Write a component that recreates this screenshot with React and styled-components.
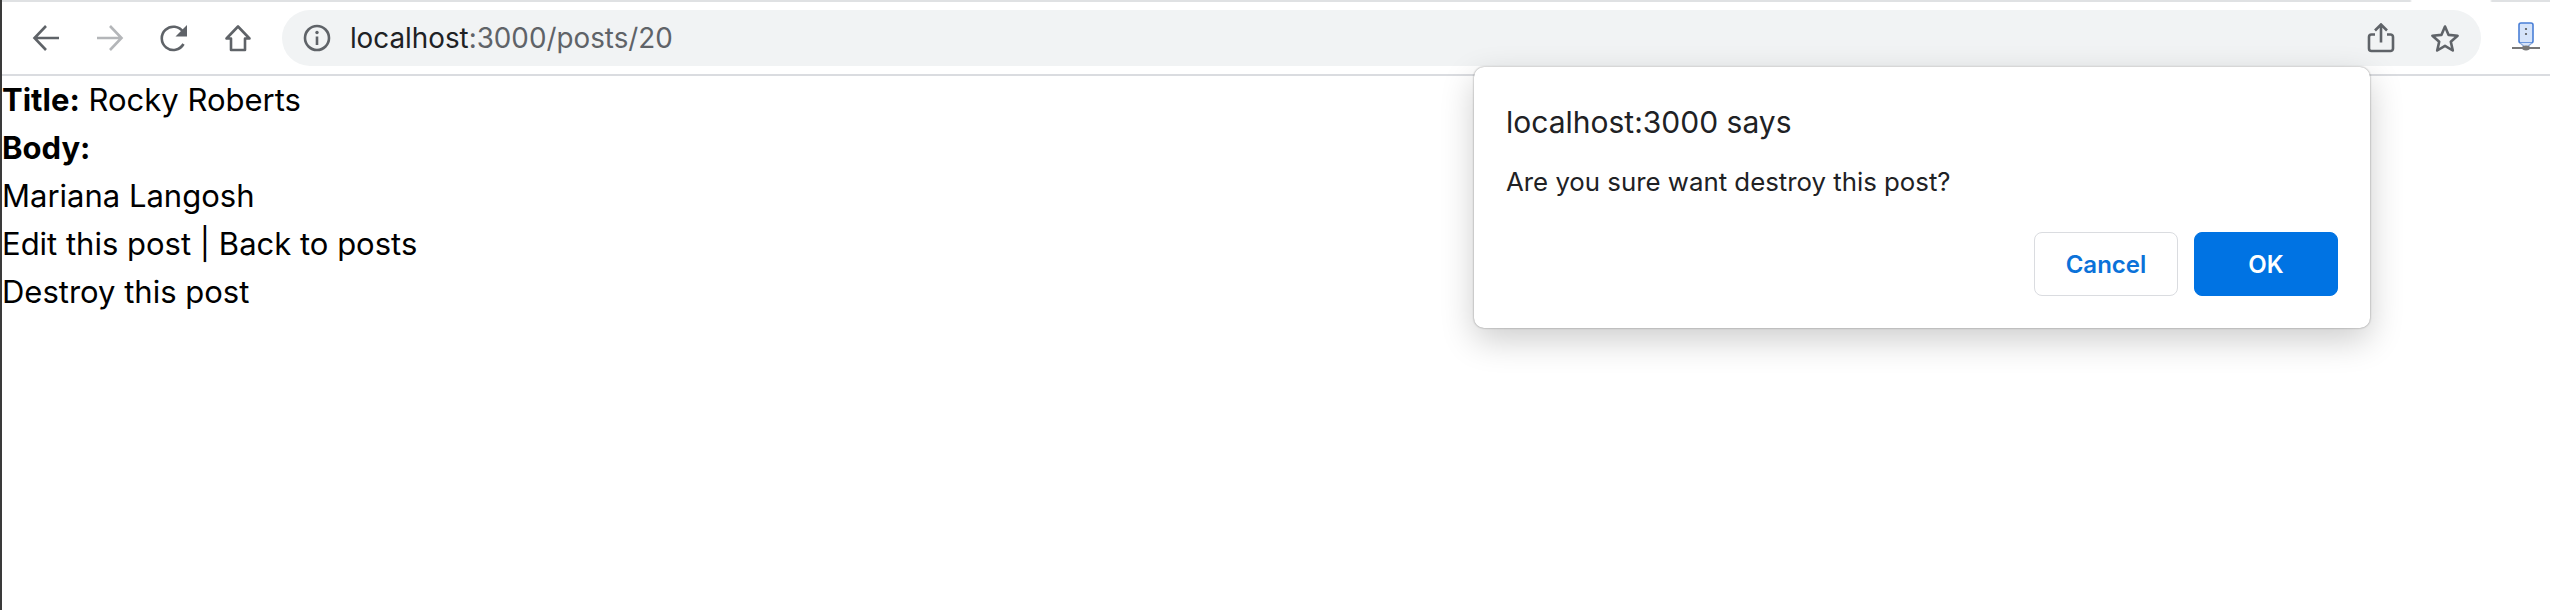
import React from "react";
import styled, { createGlobalStyle } from "styled-components";

const Global = createGlobalStyle`
  html, body { margin: 0; padding: 0; background: #fff; }
  body { font-family: Inter, "Liberation Sans", sans-serif; color: #000; }
`;

const Page = styled.div`
  position: relative;
  width: 2550px;
  height: 610px;
  overflow: hidden;
  background: #fff;
  border-left: 2px solid #3a3a3a;
  box-sizing: border-box;
`;

const TopStripe = styled.div`
  height: 2px;
  background: linear-gradient(to right, #dfe1e3 0, #dfe1e3 2408px, #fff 2410px, #fff 2488px, #dfe1e3 2490px);
`;

const Toolbar = styled.header`
  height: 74px;
  box-sizing: border-box;
  display: flex;
  align-items: center;
  border-bottom: 2px solid #dadce0;
  padding: 8px 9px 8px 30px;
`;

const NavGroup = styled.nav`
  display: flex;
  align-items: center;
  gap: 36px;
  width: 250px;
`;

const NavIcon = styled.svg`
  width: 28px;
  height: 28px;
  flex: none;
  fill: none;
  stroke: ${(p) => p.$color || "#5f6368"};
  stroke-width: 2.6;
`;

const Omnibox = styled.div`
  width: 2200px;
  height: 56px;
  box-sizing: border-box;
  display: flex;
  align-items: center;
  border-radius: 28px;
  background: #f1f3f4;
  padding: 0 21px;
`;

const Url = styled.div`
  flex: 1;
  margin-left: 19px;
  font-size: 27.8px;
  color: #5f6368;
`;

const Host = styled.span`
  color: #202124;
`;

const OmniActions = styled.div`
  display: flex;
  align-items: center;
  gap: 35px;
`;

const ExtensionSlot = styled.div`
  margin-left: 30px;
  width: 30px;
  height: 32px;
  flex: none;
`;

const Content = styled.main`
  font-size: 31px;
  line-height: 48px;
`;

const Line = styled.div`
  height: 48px;
`;

const Dialog = styled.div`
  position: absolute;
  left: 1472px;
  top: 67px;
  width: 896px;
  height: 261px;
  box-sizing: border-box;
  background: #fff;
  border-radius: 10px;
  box-shadow: 0 0 2px rgba(0,0,0,.45), 0 12px 34px rgba(0,0,0,.2);
  padding: 37px 32px 32px;
  display: flex;
  flex-direction: column;
`;

const DialogTitle = styled.div`
  font-size: 30px;
  line-height: 36px;
  color: #202124;
`;

const DialogMessage = styled.div`
  margin-top: 24px;
  font-size: 25.8px;
  line-height: 36px;
  color: #202124;
`;

const DialogActions = styled.div`
  margin-top: auto;
  display: flex;
  justify-content: flex-end;
  gap: 16px;
`;

const DialogButton = styled.div`
  width: 144px;
  height: 64px;
  box-sizing: border-box;
  display: flex;
  align-items: center;
  justify-content: center;
  border-radius: 8px;
  font-size: 24px;
  font-weight: 600;
  border: 1px solid ${(p) => (p.$primary ? "#0073e3" : "#dadce0")};
  background: ${(p) => (p.$primary ? "#0073e3" : "#fff")};
  color: ${(p) => (p.$primary ? "#fff" : "#0b72d9")};
`;

const Arrow = ({ dir, color }) => (
  <NavIcon viewBox="0 0 28 28" $color={color}>
    {dir === "left" ? (
      <path d="M27 14H3M14 2L2.5 14L14 26" />
    ) : (
      <path d="M1 14H25M14 2L25.5 14L14 26" />
    )}
  </NavIcon>
);

const Reload = () => (
  <NavIcon viewBox="0 0 28 28">
    <path d="M23.5 20a11.6 11.6 0 1 1-.4-12" />
    <path d="M27 1v11.5H15.5z" fill="#5f6368" stroke="none" />
  </NavIcon>
);

const Home = () => (
  <NavIcon viewBox="0 0 28 28">
    <path d="M14 2.5L2.5 14.5H7V26H21V14.5H25.5z" strokeLinejoin="round" />
  </NavIcon>
);

const Info = () => (
  <NavIcon viewBox="0 0 28 28">
    <circle cx="14" cy="14" r="12" />
    <path d="M14 12.5V21" />
    <circle cx="14" cy="8.5" r="1.7" fill="#5f6368" stroke="none" />
  </NavIcon>
);

const Share = () => (
  <NavIcon viewBox="0 0 28 30" style={{ height: 30 }}>
    <path d="M8 11.5H4.5a2.5 2.5 0 0 0-2.5 2.5V25.5A2.5 2.5 0 0 0 4.5 28H23.5A2.5 2.5 0 0 0 26 25.5V14A2.5 2.5 0 0 0 23.5 11.5H20" />
    <path d="M14 19.5V2M8 7.5L14 1.5L20 7.5" />
  </NavIcon>
);

const Star = () => (
  <NavIcon viewBox="0 0 30 30" style={{ width: 30, height: 30 }}>
    <path d="M15 3.5L18.6 11.9L27.6 12.7L20.8 18.7L22.8 27.5L15 22.9L7.2 27.5L9.2 18.7L2.4 12.7L11.4 11.9z" strokeLinejoin="round" />
  </NavIcon>
);

const Extension = () => (
  <svg width="30" height="32" viewBox="0 0 30 32">
    <rect x="8" y="1" width="14" height="20" rx="2" fill="#d6e4fa" stroke="#4a7fd6" strokeWidth="1.6" />
    <circle cx="15" cy="7" r="1.1" fill="#555" />
    <circle cx="15" cy="12" r="1.1" fill="#555" />
    <path d="M9 21L15 26L21 21" fill="#d6e4fa" stroke="#8aa8d8" strokeWidth="1.2" />
    <path d="M1 26H29" stroke="#555" strokeWidth="1.6" />
    <ellipse cx="15" cy="26" rx="4" ry="2.4" fill="#777" />
  </svg>
);

export default function App() {
  return (
    <Page>
      <Global />
      <TopStripe />
      <Toolbar>
        <NavGroup>
          <Arrow dir="left" />
          <Arrow dir="right" color="#b4b6b9" />
          <Reload />
          <Home />
        </NavGroup>
        <Omnibox>
          <Info />
          <Url>
            <Host>localhost</Host>:3000/posts/20
          </Url>
          <OmniActions>
            <Share />
            <Star />
          </OmniActions>
        </Omnibox>
        <ExtensionSlot>
          <Extension />
        </ExtensionSlot>
      </Toolbar>
      <Content>
        <Line>
          <strong>Title:</strong> Rocky Roberts
        </Line>
        <Line>
          <strong>Body:</strong>
        </Line>
        <Line>Mariana Langosh</Line>
        <Line>Edit this post | Back to posts</Line>
        <Line>Destroy this post</Line>
      </Content>
      <Dialog>
        <DialogTitle>localhost:3000 says</DialogTitle>
        <DialogMessage>Are you sure want destroy this post?</DialogMessage>
        <DialogActions>
          <DialogButton>Cancel</DialogButton>
          <DialogButton $primary>OK</DialogButton>
        </DialogActions>
      </Dialog>
    </Page>
  );
}
